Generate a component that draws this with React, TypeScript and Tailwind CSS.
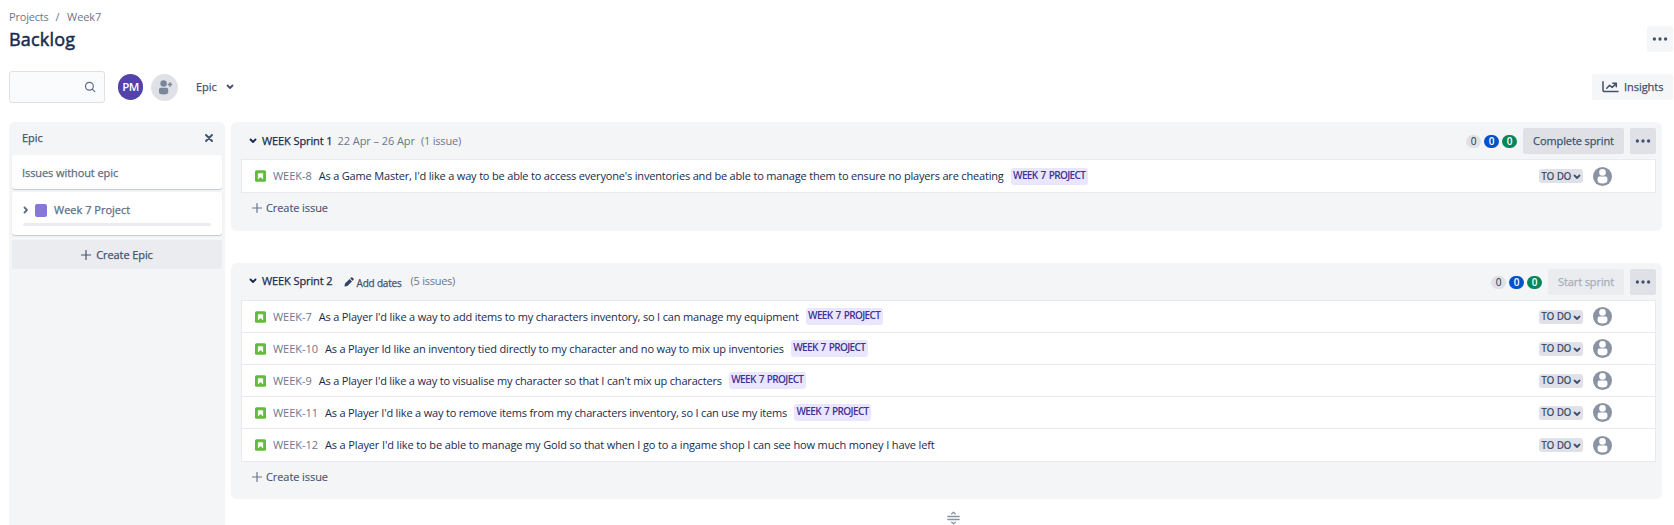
import React from 'react';

type Issue = { id: string; summary: string; epic?: boolean; tracking: string };

const sprintOne: Issue[] = [
  {
    id: 'WEEK-8',
    summary:
      "As a Game Master, I'd like a way to be able to access everyone's inventories and be able to manage them to ensure no players are cheating",
    epic: true,
    tracking: 'tracking-[-0.177px]',
  },
];

const sprintTwo: Issue[] = [
  { id: 'WEEK-7', summary: "As a Player I'd like a way to add items to my characters inventory, so I can manage my equipment", epic: true, tracking: 'tracking-[-0.17px]' },
  { id: 'WEEK-10', summary: 'As a Player Id like an inventory tied directly to my character and no way to mix up inventories', epic: true, tracking: 'tracking-[-0.172px]' },
  { id: 'WEEK-9', summary: "As a Player I'd like a way to visualise my character so that I can't mix up characters", epic: true, tracking: 'tracking-[-0.183px]' },
  { id: 'WEEK-11', summary: "As a Player I'd like a way to remove items from my characters inventory, so I can use my items", epic: true, tracking: 'tracking-[-0.183px]' },
  { id: 'WEEK-12', summary: "As a Player I'd like to be able to manage my Gold so that when I go to a ingame shop I can see how much money I have left", tracking: 'tracking-[-0.125px]' },
];

function Chevron({ className = '' }: { className?: string }) {
  return (
    <svg viewBox="0 0 8 6" className={`h-[6px] w-[8px] shrink-0 ${className}`} fill="none" stroke="currentColor" strokeWidth="1.8" strokeLinecap="round" strokeLinejoin="round">
      <path d="M1.5 1.5 4 4 6.5 1.5" />
    </svg>
  );
}

function Dots() {
  return (
    <svg viewBox="0 0 16 4" className="h-[4px] w-[16px]" fill="currentColor">
      <circle cx="2.4" cy="2" r="1.65" />
      <circle cx="8" cy="2" r="1.65" />
      <circle cx="13.6" cy="2" r="1.65" />
    </svg>
  );
}

function Plus({ className = '' }: { className?: string }) {
  return (
    <svg viewBox="0 0 10 10" className={`h-[10px] w-[10px] shrink-0 ${className}`} fill="none" stroke="currentColor" strokeWidth="1.2" strokeLinecap="round">
      <path d="M5 .5v9M.5 5h9" />
    </svg>
  );
}

function StoryIcon() {
  return (
    <svg viewBox="0 0 11 12" className="h-[12px] w-[11px] shrink-0">
      <rect y=".3" width="11" height="11.5" rx="1.5" fill="#63ba3c" />
      <path d="M3.2 3.4h4.6v5.6L5.5 7 3.2 9z" fill="#fff" stroke="#fff" strokeWidth=".5" strokeLinejoin="round" />
    </svg>
  );
}

function Avatar() {
  return (
    <svg viewBox="0 0 19 19" className="block h-[19px] w-[19px] shrink-0">
      <circle cx="9.5" cy="9.5" r="9.5" fill="#8993a4" />
      <circle cx="9.5" cy="5.4" r="3.3" fill="#fff" />
      <path d="M4.6 11.2a1.6 1.6 0 0 1 1.6-1.6h6.6a1.6 1.6 0 0 1 1.6 1.6v2.600c0 1.500-2 2.700-4.900 2.700s-4.900-1.200-4.900-2.700z" fill="#fff" />
    </svg>
  );
}

function Counts() {
  return (
    <div className="mr-[6px] flex gap-[3px] text-[10px] leading-[13px]">
      <span className="h-[13px] w-[15px] rounded-full bg-[#dfe1e6] text-center text-[#172b4d]">0</span>
      <span className="h-[13px] w-[15px] rounded-full bg-[#0052cc] text-center font-semibold text-white">0</span>
      <span className="h-[13px] w-[15px] rounded-full bg-[#00875a] text-center font-semibold text-white">0</span>
    </div>
  );
}

function IssueRow({ issue }: { issue: Issue }) {
  return (
    <div className="flex h-[32px] items-center border-b border-[#e9eaee] pr-[43px] pl-[13px] last:h-[33px]">
      <StoryIcon />
      <span className="ml-[7px] tracking-[-0.05px] text-[#6b778c]">{issue.id}</span>
      <span className={`ml-[7px] text-[#172b4d] ${issue.tracking}`}>{issue.summary}</span>
      {issue.epic && (
        <span className="ml-[7px] h-[17px] w-[77px] rounded-[3px] bg-[#eae6ff] text-center text-[10px] leading-[15px] font-semibold tracking-[-0.62px] text-[#403294] [word-spacing:1px]">
          WEEK 7 PROJECT
        </span>
      )}
      <span className="ml-auto flex h-[14px] w-[44px] items-center justify-center gap-[2px] rounded-[3px] bg-[#dfe1e6] text-[10px] leading-[13px] font-semibold tracking-[-0.6px] text-[#42526e] [word-spacing:1px]">
        TO DO
        <Chevron className="mt-[2px]" />
      </span>
      <span className="ml-[10px]">
        <Avatar />
      </span>
    </div>
  );
}

type SprintProps = {
  title: string;
  meta: React.ReactNode;
  action: string;
  upcoming?: boolean;
  issues: Issue[];
};

function Sprint({ title, meta, action, upcoming, issues }: SprintProps) {
  return (
    <section className={`rounded-[6px] bg-[#f4f5f7] pr-[6px] pl-[10px] ${upcoming ? 'pb-[7px]' : 'pb-[8px]'}`}>
      <header className="flex h-[37px] items-center pt-px">
        <div className={`flex items-center ${upcoming ? 'pb-[2px]' : ''}`}>
          <Chevron className="mb-px ml-[7.5px] text-[#172b4d]" />
          <h2 className="ml-[5.5px] tracking-[-0.1px] text-[#172b4d] [-webkit-text-stroke:0.25px]">{title}</h2>
          {meta}
        </div>
        <div className="ml-auto flex items-center">
          <Counts />
          <button
            className={
              upcoming
                ? 'h-[26px] w-[76px] rounded-[2px] bg-[#ebecf0] tracking-[-0.1px] text-[#a5adba] [-webkit-text-stroke:0.25px]'
                : 'h-[26px] w-[101px] rounded-[2px] bg-[#dfe1e6] tracking-[-0.1px] text-[#42526e] [-webkit-text-stroke:0.25px]'
            }
          >
            {action}
          </button>
          <button className="ml-[6px] flex h-[26px] w-[26px] items-center justify-center rounded-[2px] bg-[#dfe1e6] text-[#42526e]">
            <Dots />
          </button>
        </div>
      </header>
      <div className="border border-b-0 border-[#e9eaee] bg-white">
        {issues.map((issue) => (
          <IssueRow key={issue.id} issue={issue} />
        ))}
      </div>
      <button className="flex h-[30px] items-center pl-[11px] text-[#42526e]">
        <Plus className="text-[#6b778c]" />
        <span className="ml-[4px] tracking-[-0.08px] [-webkit-text-stroke:0.1px]">Create issue</span>
      </button>
    </section>
  );
}

export default function App() {
  return (
    <div className="flex h-[525px] w-[1674px] flex-col overflow-hidden bg-white pl-[9px] font-['Open_Sans','Noto_Sans',sans-serif] text-[11px] leading-[16px] whitespace-nowrap">
      <nav className="mt-[9px] flex text-[#6b778c]">
        <span className="tracking-[-0.2px]">Projects</span>
        <span className="mr-[7.500px] ml-[7px]">/</span>
        <span className="tracking-[-0.1px]">Week7</span>
      </nav>
      <div className="mt-px flex h-[26px] items-center justify-between pr-px">
        <h1 className="text-[18px] leading-[24px] tracking-[0.2px] text-[#172b4d] [-webkit-text-stroke:0.5px]">Backlog</h1>
        <button className="flex h-[26px] w-[26px] items-center justify-center rounded-[2px] bg-[#f5f6f8] text-[#42526e]">
          <Dots />
        </button>
      </div>
      <div className="mt-[19px] flex h-[32px] items-center pr-px">
        <div className="flex h-[32px] w-[96px] items-center justify-end rounded-[3px] border border-[#dfe1e6] bg-[#fafbfc] pr-[8px]">
          <svg viewBox="0 0 12 12" className="h-[12px] w-[12px] text-[#5e6c84]" fill="none" stroke="currentColor" strokeWidth="1.2" strokeLinecap="round">
            <circle cx="5.4" cy="5.2" r="3.9" />
            <path d="m8.3 8.100 2.500 2.500" />
          </svg>
        </div>
        <span className="ml-[13px] h-[26px] w-[25px] rounded-full bg-[#5243aa] text-center text-[11.5px] leading-[26px] font-semibold tracking-[-0.5px] text-white">PM</span>
        <span className="ml-[8px] flex h-[27px] w-[27px] items-center justify-center rounded-full bg-[#dfe1e6]">
          <svg viewBox="0 0 15 15" className="ml-[2px] h-[15px] w-[15px] text-[#7a869a]" fill="currentColor">
            <circle cx="5.6" cy="3.5" r="3.2" />
            <path d="M1 9.400a1.600 1.600 0 0 1 1.600-1.600h6a1.600 1.600 0 0 1 1.600 1.600v3.200c0 1.200-1.700 2-4.600 2S1 13.800 1 12.600z" />
            <path d="M12 2.300v4.400M9.800 4.500h4.400" stroke="currentColor" strokeWidth="1.500" />
          </svg>
        </span>
        <span className="ml-[18px] text-[#42526e] [-webkit-text-stroke:0.25px]">Epic</span>
        <Chevron className="ml-[9px] text-[#42526e]" />
        <button className="ml-auto flex h-[26px] w-[81px] items-center rounded-[2px] bg-[#f5f6f8] pl-[10px] text-[#42526e] [-webkit-text-stroke:0.25px]">
          <svg viewBox="0 0 17 12" className="h-[12px] w-[17px]" fill="none" stroke="currentColor" strokeWidth="1.500" strokeLinecap="round" strokeLinejoin="round">
            <path d="M1 .8v8.400a1.300 1.300 0 0 0 1.300 1.300H16M4.800 7.200l2.800-3 2.500 2.200 4-3.800M10.800 2.300h3.500v3.400" />
          </svg>
          <span className="ml-[5px] tracking-[-0.05px]">Insights</span>
        </button>
      </div>
      <div className="mt-[19px] flex min-h-0 flex-1">
        <aside className="w-[216px] rounded-t-[6px] bg-[#f4f5f7] px-[3px]">
          <div className="flex h-[33px] items-center justify-between pr-[9px] pb-[2px] pl-[10px] text-[#42526e]">
            <span className="[-webkit-text-stroke:0.25px]">Epic</span>
            <svg viewBox="0 0 8 8" className="h-[8px] w-[8px]" stroke="currentColor" strokeWidth="1.900" strokeLinecap="round">
              <path d="m1 1 6 6M7 1 1 7" />
            </svg>
          </div>
          <div className="flex h-[34px] items-center rounded-[3px] bg-white pt-[2px] pl-[10px] tracking-[-0.08px] text-[#5e6c84] shadow-[0_1px_1px_rgba(9,30,66,0.2)] [-webkit-text-stroke:0.25px]">
            Issues without epic
          </div>
          <div className="mt-[3px] h-[43px] rounded-[3px] bg-white px-[11px] pt-[10px] shadow-[0_1px_1px_rgba(9,30,66,0.2)]">
            <div className="flex items-center text-[#5e6c84] [-webkit-text-stroke:0.25px]">
              <Chevron className="-ml-px -rotate-90" />
              <span className="ml-[5px] h-[13px] w-[12px] rounded-[2px] bg-[#8777d9]" />
              <span className="ml-[7px]">Week 7 Project</span>
            </div>
            <div className="mt-[5px] h-[3px] rounded-full bg-[#ebecf0]" />
          </div>
          <button className="mt-[5px] flex h-[29px] w-full items-center justify-center rounded-[2px] bg-[#ebecf0] text-[#42526e] [-webkit-text-stroke:0.25px]">
            <Plus />
            <span className="ml-[5px] tracking-[-0.1px]">Create Epic</span>
          </button>
        </aside>
        <main className="ml-[6px] flex w-[1431px] flex-col">
          <Sprint
            title="WEEK Sprint 1"
            action="Complete sprint"
            issues={sprintOne}
            meta={
              <span className="flex text-[#6b778c]">
                <span className="ml-[5px] tracking-[-0.07px]">22 Apr – 26 Apr</span>
                <span className="ml-[6px] tracking-[-0.2px]">(1 issue)</span>
              </span>
            }
          />
          <div className="h-[32px] shrink-0" />
          <Sprint
            title="WEEK Sprint 2"
            action="Start sprint"
            upcoming
            issues={sprintTwo}
            meta={
              <span className="flex items-center text-[#6b778c]">
                <svg viewBox="0 0 10 10" className="mt-[2px] ml-[11px] h-[10px] w-[10px] text-[#344563]" fill="currentColor">
                  <path d="M.4 9.600 1 6.600 5.600 2 8 4.400 3.400 9zM6.200 1.400 7.100.5a.9.9 0 0 1 1.300 0l1.100 1.100a.9.9 0 0 1 0 1.300l-.9.900z" />
                </svg>
                <span className="mt-[3px] ml-[3px] text-[10px] tracking-[-0.2px] text-[#42526e] [-webkit-text-stroke:0.25px]">Add dates</span>
                <span className="ml-[9px] tracking-[-0.25px]">(5 issues)</span>
              </span>
            }
          />
          <div className="flex h-[27px] items-end justify-center pl-[13px]">
            <svg viewBox="0 0 13 14" className="h-[14px] w-[13px] text-[#8993a4]" fill="none" stroke="currentColor" strokeWidth="1.300" strokeLinecap="round" strokeLinejoin="round">
              <path d="M.8 5.500h11.400M.8 8.500h11.400M4.700 2.800l1.800-1.600 1.800 1.600M4.700 11.200l1.800 1.600 1.800-1.600" />
            </svg>
          </div>
        </main>
      </div>
    </div>
  );
}
